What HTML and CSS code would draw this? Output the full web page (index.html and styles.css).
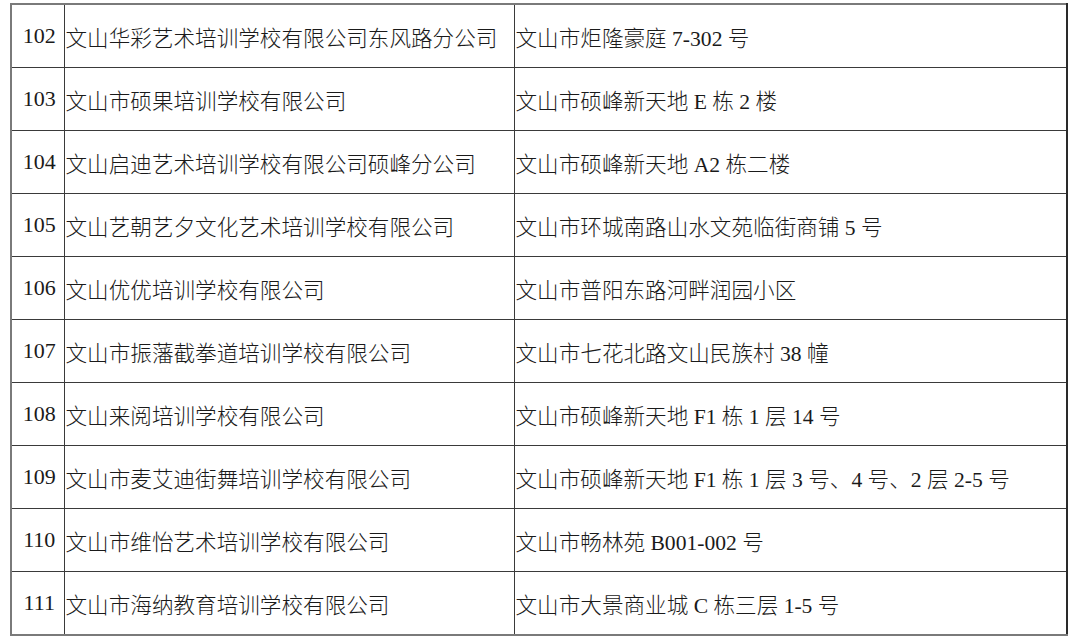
FILE: index.html
```html
<!DOCTYPE html>
<html lang="zh">
<head>
<meta charset="utf-8">
<link rel="stylesheet" href="styles.css">
</head>
<body>
<table class="list">
  <colgroup><col class="c-no"><col class="c-name"><col class="c-addr"></colgroup>
  <tbody>
    <tr><td class="no">102</td><td>文山华彩艺术培训学校有限公司东风路分公司</td><td>文山市炬隆豪庭 7-302 号</td></tr>
    <tr><td class="no">103</td><td>文山市硕果培训学校有限公司</td><td>文山市硕峰新天地 E 栋 2 楼</td></tr>
    <tr><td class="no">104</td><td>文山启迪艺术培训学校有限公司硕峰分公司</td><td>文山市硕峰新天地 A2 栋二楼</td></tr>
    <tr><td class="no">105</td><td>文山艺朝艺夕文化艺术培训学校有限公司</td><td>文山市环城南路山水文苑临街商铺 5 号</td></tr>
    <tr><td class="no">106</td><td>文山优优培训学校有限公司</td><td>文山市普阳东路河畔润园小区</td></tr>
    <tr><td class="no">107</td><td>文山市振藩截拳道培训学校有限公司</td><td>文山市七花北路文山民族村 38 幢</td></tr>
    <tr><td class="no">108</td><td>文山来阅培训学校有限公司</td><td>文山市硕峰新天地 F1 栋 1 层 14 号</td></tr>
    <tr><td class="no">109</td><td>文山市麦艾迪街舞培训学校有限公司</td><td>文山市硕峰新天地 F1 栋 1 层 3 号、4 号、2 层 2-5 号</td></tr>
    <tr><td class="no">110</td><td>文山市维怡艺术培训学校有限公司</td><td>文山市畅林苑 B001-002 号</td></tr>
    <tr><td class="no">111</td><td>文山市海纳教育培训学校有限公司</td><td>文山市大景商业城 C 栋三层 1-5 号</td></tr>
  </tbody>
</table>
</body>
</html>
```

FILE: styles.css
```css
html, body {
  margin: 0;
  padding: 0;
  background: #ffffff;
}
body {
  padding: 3px 0 0 10px;
  font-family: "Liberation Serif", "Noto Sans CJK SC", sans-serif;
  font-size: 21.6px;
  font-weight: 300;
  color: #1a1a1a;
}
.list {
  border-collapse: collapse;
  table-layout: fixed;
  width: 1058px;
  border: 2px solid #7a7a7a;
  border-right-color: #2a2a2a;
}
.c-no { width: 53px; }
.c-name { width: 450px; }
.c-addr { width: auto; }
.list td {
  height: 62px;
  padding: 0 0 0 1px;
  border: 1px solid #3a3a3a;
  vertical-align: middle;
  white-space: nowrap;
  overflow: hidden;
}
.list td.no {
  text-align: center;
  padding: 0 0 0 3px;
  font-size: 22px;
}
```
